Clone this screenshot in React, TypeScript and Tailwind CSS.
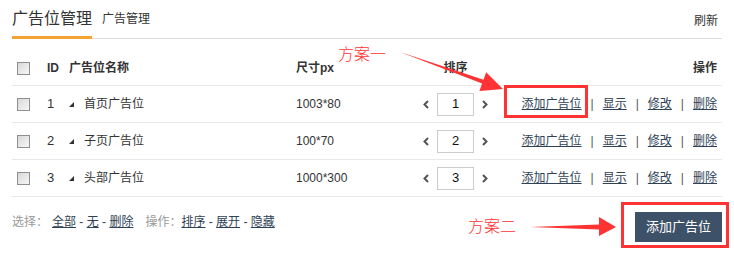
const font = { fontFamily: '"Liberation Sans", "Noto Sans CJK SC", sans-serif' };

const rows = [
  { id: 1, name: '首页广告位', size: '1003*80', sort: 1 },
  { id: 2, name: '子页广告位', size: '100*70', sort: 2 },
  { id: 3, name: '头部广告位', size: '1000*300', sort: 3 },
];

const Checkbox = () => (
  <span className="block h-[13px] w-[13px] border border-[#8e8e8e] bg-gradient-to-br from-[#d8d8d8] to-[#f7f7f7]" />
);

const Chevron = ({ dir }: { dir: 'left' | 'right' }) => (
  <svg width="6" height="9" viewBox="0 0 6 9" className="shrink-0">
    <polyline
      points={dir === 'left' ? '5,1 1.5,4.5 5,8' : '1,1 4.5,4.5 1,8'}
      fill="none"
      stroke="#555"
      strokeWidth="2"
    />
  </svg>
);

const Tri = () => (
  <svg width="5" height="5" viewBox="0 0 5 5" className="shrink-0">
    <polygon points="5,0 5,5 0,5" fill="#333" />
  </svg>
);

export default function App() {
  return (
    <div className="relative w-[734px] h-[261px] bg-white px-[12px] text-[#333]" style={font}>
      {/* header */}
      <div className="flex items-end justify-between h-[39px] border-b border-[#dedede]">
        <div className="flex items-end">
          <span className="text-[16px] leading-[20px] pb-[7px] border-b-[3px] border-[#f5a433] -mb-px">
            广告位管理
          </span>
          <span className="ml-[10px] text-[12px] leading-[20px] mb-[9px]">广告管理</span>
        </div>
        <span className="text-[12px] leading-[20px] mb-[7px] mr-[4px]">刷新</span>
      </div>

      {/* table head */}
      <div className="flex items-center h-[47px] pt-[12px] border-b border-[#e8e8e8] text-[12px] font-bold">
        <div className="w-[35px] pl-[5px]">
          <Checkbox />
        </div>
        <div className="w-[22px]">ID</div>
        <div className="w-[227px]">广告位名称</div>
        <div className="w-[114px]">尺寸px</div>
        <div className="w-[91px] text-center">排序</div>
        <div className="flex-1 text-right pr-[5px]">操作</div>
      </div>

      {/* rows */}
      {rows.map((r) => (
        <div key={r.id} className="flex items-center h-[37px] border-b border-[#e8e8e8] text-[12px]">
          <div className="w-[35px] pl-[5px]">
            <Checkbox />
          </div>
          <div className="w-[22px] text-[13px]">{r.id}</div>
          <div className="w-[227px] flex items-center gap-[10px]">
            <Tri />
            <span>{r.name}</span>
          </div>
          <div className="w-[114px]">{r.size}</div>
          <div className="w-[91px] flex items-center justify-center gap-[8px]">
            <Chevron dir="left" />
            <span className="flex items-center justify-center w-[37px] h-[23px] border border-[#ccc] text-[13px] text-[#111]">
              {r.sort}
            </span>
            <Chevron dir="right" />
          </div>
          <div className="flex-1 flex justify-end items-center pr-[5px] text-[#2f4255]">
            <a className="underline">添加广告位</a>
            <span className="px-[9px] text-[#555]">|</span>
            <a className="underline">显示</a>
            <span className="px-[9px] text-[#555]">|</span>
            <a className="underline">修改</a>
            <span className="px-[9px] text-[#555]">|</span>
            <a className="underline">删除</a>
          </div>
        </div>
      ))}

      {/* footer */}
      <div className="flex items-start justify-between pt-[15px] text-[12px]">
        <div className="leading-[20px] text-[#333]">
          <span className="text-[#999]">选择：</span>
          <span className="ml-[4px] text-[#2f4255]">
            <a className="underline">全部</a> - <a className="underline">无</a> - <a className="underline">删除</a>
          </span>
          <span className="ml-[12px] text-[#999]">操作：</span>
          <span className="text-[#2f4255]">
            <a className="underline">排序</a> - <a className="underline">展开</a> - <a className="underline">隐藏</a>
          </span>
        </div>
        <button className="w-[87px] h-[30px] bg-[#3d5268] text-white text-[13px]">添加广告位</button>
      </div>

      {/* annotations */}
      <div className="absolute left-[504px] top-[85px] w-[84px] h-[33px] border-[3px] border-[#f33]" />
      <div className="absolute left-[621px] top-[202px] w-[108px] h-[46px] border-[3px] border-[#f33]" />
      <span className="absolute left-[338px] top-[44px] text-[16px] leading-[22px] text-[#f33] font-light">方案一</span>
      <span className="absolute left-[468px] top-[216px] text-[16px] leading-[22px] text-[#f33] font-light">方案二</span>
      <svg className="absolute left-0 top-0 pointer-events-none" width="734" height="261">
        <polygon
          points="400,52 483.5,79.8 486.2,72.3 503,89 479.4,91.1 482.1,83.6"
          fill="#f33"
        />
        <polygon points="530,227 599,224.5 599,217 616,227 599,236 599,229.5" fill="#f33" />
      </svg>
    </div>
  );
}
